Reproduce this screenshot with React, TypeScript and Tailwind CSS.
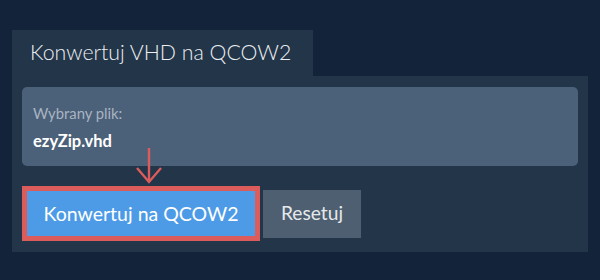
export default function App() {
  return (
    <div
      className="w-[600px] h-[280px] bg-[#12233a] pt-[30px] px-3"
      style={{ fontFamily: 'Lato, "Open Sans", sans-serif' }}
    >
      <div className="w-[301px] h-[46px] bg-[#223549] flex items-center pl-[18px]">
        <span className="text-[21.3px] font-light text-[#eceef1] leading-none">Konwertuj VHD na QCOW2</span>
      </div>
      <div className="bg-[#223549] px-[10px] pt-[11px] pb-[11px]">
        <div className="h-[79px] rounded-[5px] bg-[#4b6079] px-[11px] pt-[17px]">
          <div className="text-[14.8px] leading-[18px] text-[#a9b4c1]">Wybrany plik:</div>
          <div className="mt-[9px] text-[16.5px] leading-[20px] font-bold text-white">ezyZip.vhd</div>
        </div>
        <div className="relative mt-[20px] flex items-center gap-[3px]">
          <svg
            className="absolute left-[107px] top-[-39px]"
            width="40"
            height="38"
            viewBox="0 0 40 38"
          >
            <line x1="20" y1="1" x2="20" y2="35" stroke="#db5c5a" strokeWidth="2.4" />
            <polyline points="8,21 20,35 32,21" fill="none" stroke="#db5c5a" strokeWidth="2.4" />
          </svg>
          <div className="border-[5px] border-[#db5c5a]">
            <button className="w-[228px] h-[45px] bg-[#4d9be6] text-white text-[19.5px]">
              Konwertuj na QCOW2
            </button>
          </div>
          <button className="w-[98px] h-[48px] bg-[#4d5f70] text-[#e6e9ec] text-[19.2px]">
            Resetuj
          </button>
        </div>
      </div>
    </div>
  );
}
